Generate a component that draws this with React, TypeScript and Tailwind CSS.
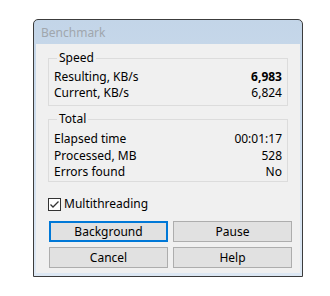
import React from "react";

const font = { fontFamily: '"Noto Sans", "Segoe UI", sans-serif' };

function Row({ label, value, bold }: { label: string; value: string; bold?: boolean }) {
  return (
    <div className="flex h-[16px] items-center justify-between leading-[16px]">
      <span>{label}</span>
      <span className={bold ? "font-bold" : ""}>{value}</span>
    </div>
  );
}

function Btn({ children, focused }: { children: React.ReactNode; focused?: boolean }) {
  return (
    <button
      className={
        "h-[21px] bg-[#e1e1e1] text-[12px] leading-[16px] text-black " +
        (focused ? "border-2 border-[#0078d7]" : "border border-[#adadad]")
      }
    >
      {children}
    </button>
  );
}

export default function App() {
  return (
    <div className="min-h-[296px] w-[330px] bg-white pl-[33px] pt-[19px]" style={font}>
      <div className="flex h-[258px] w-[270px] flex-col rounded-t-[5px] border border-[#3c3c3c] bg-gradient-to-b from-[#c3d5e8] to-[#dde8f4]">
        <div className="flex h-[24px] items-center pl-[7px] pt-[1px] text-[12px] text-[#a0a6ad]">Benchmark</div>
        <div className="mx-[2px] flex flex-1 flex-col bg-[#f0f0f0] px-[12px] pt-[6px] text-[12px] text-black">
          <fieldset className="border border-[#dcdcdc] px-[5px] pb-[4px] pt-[3px]">
            <legend className="ml-[3px] px-[2px] leading-[16px]">Speed</legend>
            <Row label="Resulting, KB/s" value="6,983" bold />
            <Row label="Current, KB/s" value="6,824" />
          </fieldset>
          <fieldset className="mt-[5px] border border-[#dcdcdc] px-[5px] pb-[1px] pt-[4px]">
            <legend className="ml-[3px] px-[2px] leading-[16px]">Total</legend>
            <div className="flex flex-col gap-[0.5px]">
              <Row label="Elapsed time" value="00:01:17" />
              <Row label="Processed, MB" value="528" />
              <Row label="Errors found" value="No" />
            </div>
          </fieldset>
          <label className="mt-[15px] flex h-[14px] items-center gap-[3px]">
            <span className="flex h-[13px] w-[13px] items-center justify-center border border-[#333333] bg-white">
              <svg width="11" height="11" viewBox="0 0 11 11">
                <path d="M1.5 5.5 L4 8 L9.5 2.5" fill="none" stroke="#333333" strokeWidth="1.3" />
              </svg>
            </span>
            <span className="leading-[16px]">Multithreading</span>
          </label>
          <div className="ml-[1px] mt-[10px] grid w-[243px] grid-cols-2 gap-x-[5px] gap-y-[5px]">
            <Btn focused>Background</Btn>
            <Btn>Pause</Btn>
            <Btn>Cancel</Btn>
            <Btn>Help</Btn>
          </div>
        </div>
        <div className="h-[3px]" />
      </div>
    </div>
  );
}
